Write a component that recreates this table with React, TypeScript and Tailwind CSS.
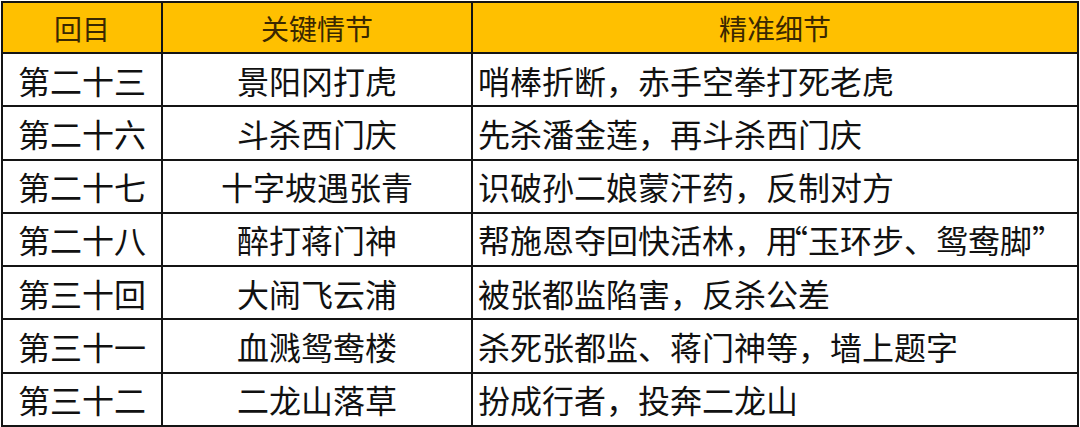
import React from "react";

const rows: [string, string, React.ReactNode][] = [
  ["第二十三", "景阳冈打虎", "哨棒折断，赤手空拳打死老虎"],
  ["第二十六", "斗杀西门庆", "先杀潘金莲，再斗杀西门庆"],
  ["第二十七", "十字坡遇张青", "识破孙二娘蒙汗药，反制对方"],
  [
    "第二十八",
    "醉打蒋门神",
    <>
      帮施恩夺回快活林，用<span className="ml-[-22px]">“</span>玉环步、鸳鸯脚
      <span className="mr-[-22px]">”</span>
    </>,
  ],
  ["第三十回", "大闹飞云浦", "被张都监陷害，反杀公差"],
  ["第三十一", "血溅鸳鸯楼", "杀死张都监、蒋门神等，墙上题字"],
  ["第三十二", "二龙山落草", "扮成行者，投奔二龙山"],
];

export default function App() {
  return (
    <div className="w-[1080px] h-[427px] bg-white pt-[1px] pl-[1px]" lang="zh-CN">
      <div
        className="w-[1078px] h-[426px] bg-[#141414] p-[2px] grid grid-cols-[158px_308px_1fr] grid-rows-[49px_repeat(7,1fr)] gap-[2px]"
        style={{ fontFamily: '"Noto Sans CJK SC", "Noto Sans", sans-serif' }}
      >
        {["回目", "关键情节", "精准细节"].map((h) => (
          <div
            key={h}
            className="bg-[#ffc000] text-[#3a2800] text-[28px] leading-none flex items-center justify-center"
          >
            {h}
          </div>
        ))}
        {rows.map(([a, b, c]) => (
          <React.Fragment key={a}>
            <div className="bg-white text-[#111] text-[32px] leading-none flex items-center justify-center">
              {a}
            </div>
            <div className="bg-white text-[#111] text-[32px] leading-none flex items-center justify-center">
              {b}
            </div>
            <div className="bg-white text-[#111] text-[32px] leading-none flex items-center pl-[5px] whitespace-nowrap">
              <span>{c}</span>
            </div>
          </React.Fragment>
        ))}
      </div>
    </div>
  );
}
